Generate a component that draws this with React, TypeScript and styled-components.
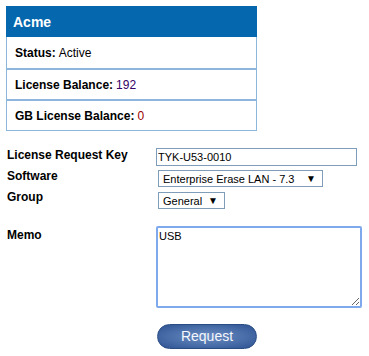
import React from 'react';
import styled, { createGlobalStyle } from 'styled-components';

const GlobalStyle = createGlobalStyle`
    body {
        margin: 0;
        background: #ffffff;
        font-family: "Liberation Sans", Arial, sans-serif;
        font-size: 12px;
        color: #000000;
    }
`;

const Page = styled.div`
    padding: 6px;
`;

const Card = styled.div`
    width: 251px;
    border: 1px solid #8cb6dc;
    border-top: none;
    box-sizing: border-box;
`;

const CardHeader = styled.div`
    height: 31px;
    margin: 0 -1px;
    padding: 0 7px;
    display: flex;
    align-items: center;
    background: #0567ad;
    color: #ffffff;
    font-size: 14px;
    font-weight: bold;
`;

const CardRow = styled.div`
    height: 29px;
    padding: 0 8px;
    display: flex;
    align-items: center;
    border-top: 2px solid #8cb6dc;
    &:nth-child(2) {
        border-top: none;
        height: 31px;
    }
`;

const Label = styled.b`
    font-weight: bold;
`;

const Value = styled.span<{ $color?: string }>`
    margin-left: 3px;
    color: ${({ $color }) => $color ? $color : '#000000'};
`;

const Form = styled.div`
    display: flex;
    flex-direction: column;
    margin-top: 17px;
`;

const FormRow = styled.div<{ $top?: number }>`
    display: grid;
    grid-template-columns: 150px auto;
    align-items: start;
    margin-top: ${({ $top }) => $top ? `${$top}px` : '0'};
`;

const FieldLabel = styled.div<{ $offset?: number }>`
    font-weight: bold;
    font-size: 12px;
    line-height: 14px;
    padding-left: 1px;
    margin-top: ${({ $offset }) => $offset ? `${$offset}px` : '0'};
`;

const TextInput = styled.input`
    width: 201px;
    height: 18px;
    box-sizing: border-box;
    border: 1px solid #7f9db9;
    padding: 0 1px;
    font-family: "Liberation Sans", Arial, sans-serif;
    font-size: 11px;
    color: #000000;
    outline: none;
`;

const SelectWrap = styled.div<{ $width: number; $ml?: number }>`
    position: relative;
    width: ${({ $width }) => $width}px;
    margin-left: ${({ $ml }) => $ml ? `${$ml}px` : '0'};
`;

const Select = styled.select`
    width: 100%;
    height: 17px;
    box-sizing: border-box;
    appearance: none;
    -webkit-appearance: none;
    border: 1px solid #7f9db9;
    border-radius: 0;
    background: #ffffff;
    padding: 0 0 0 4px;
    font-family: "Liberation Sans", Arial, sans-serif;
    font-size: 11px;
    color: #000000;
    outline: none;
`;

const Arrow = styled.span`
    position: absolute;
    right: 7px;
    top: 1px;
    font-size: 10px;
    line-height: 15px;
    pointer-events: none;
`;

const Memo = styled.textarea`
    width: 206px;
    height: 82px;
    box-sizing: border-box;
    border: 2px solid #7ea9ec;
    border-radius: 2px;
    padding: 2px 1px;
    font-family: "Liberation Sans", Arial, sans-serif;
    font-size: 11px;
    color: #000000;
    outline: none;
    resize: both;
`;

const Button = styled.button`
    width: 100px;
    height: 25px;
    margin-left: 1px;
    border: 1px solid #2a4d86;
    border-radius: 13px;
    background: radial-gradient(ellipse at center, #6a8cc2 0%, #4a6ea9 55%, #2d5291 100%);
    color: #f4f7fc;
    font-family: "Liberation Sans", Arial, sans-serif;
    font-size: 14px;
    padding: 0 0 1px;
    cursor: pointer;
`;

export default function App() {
    return (
        <>
            <GlobalStyle />
            <Page>
                <Card>
                    <CardHeader>Acme</CardHeader>
                    <CardRow>
                        <Label>Status:</Label><Value>Active</Value>
                    </CardRow>
                    <CardRow>
                        <Label>License Balance:</Label><Value $color="#330066">192</Value>
                    </CardRow>
                    <CardRow>
                        <Label>GB License Balance:</Label><Value $color="#990000">0</Value>
                    </CardRow>
                </Card>
                <Form>
                    <FormRow>
                        <FieldLabel $offset={0}>License Request Key</FieldLabel>
                        <TextInput defaultValue="TYK-U53-0010" />
                    </FormRow>
                    <FormRow $top={4}>
                        <FieldLabel $offset={-1}>Software</FieldLabel>
                        <SelectWrap $width={165} $ml={2}>
                            <Select defaultValue="lan73">
                                <option value="lan73">Enterprise Erase LAN - 7.3</option>
                            </Select>
                            <Arrow>▼</Arrow>
                        </SelectWrap>
                    </FormRow>
                    <FormRow $top={5}>
                        <FieldLabel $offset={-2}>Group</FieldLabel>
                        <SelectWrap $width={67} $ml={2}>
                            <Select defaultValue="general">
                                <option value="general">General</option>
                            </Select>
                            <Arrow>▼</Arrow>
                        </SelectWrap>
                    </FormRow>
                    <FormRow $top={17}>
                        <FieldLabel $offset={2}>Memo</FieldLabel>
                        <Memo defaultValue="USB" />
                    </FormRow>
                    <FormRow $top={16}>
                        <span />
                        <Button>Request</Button>
                    </FormRow>
                </Form>
            </Page>
        </>
    );
}
